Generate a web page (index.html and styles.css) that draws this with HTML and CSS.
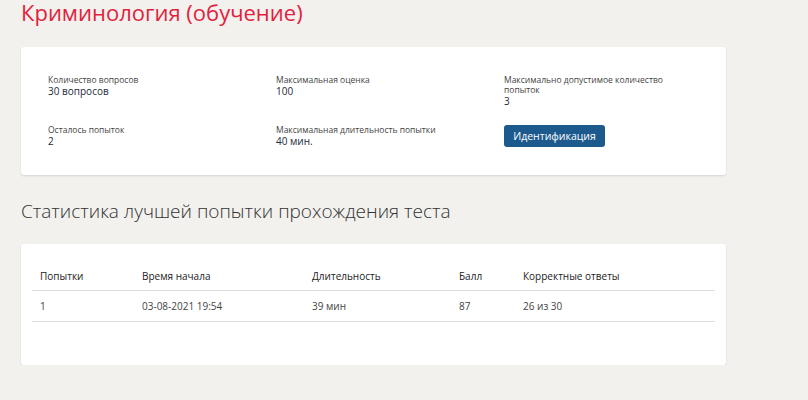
FILE: index.html
```html
<!DOCTYPE html>
<html lang="ru">
<head>
<meta charset="utf-8">
<link rel="stylesheet" href="styles.css">
</head>
<body>
<div class="page">
  <h1 class="title">Криминология (обучение)</h1>
  <section class="card info">
    <div class="item"><div class="label">Количество вопросов</div><div class="value">30 вопросов</div></div>
    <div class="item"><div class="label">Максимальная оценка</div><div class="value">100</div></div>
    <div class="item"><div class="label">Максимально допустимое количество попыток</div><div class="value">3</div></div>
    <div class="item"><div class="label">Осталось попыток</div><div class="value">2</div></div>
    <div class="item"><div class="label">Максимальная длительность попытки</div><div class="value">40 мин.</div></div>
    <div class="item"><button class="btn">Идентификация</button></div>
  </section>
  <h2 class="subtitle">Статистика лучшей попытки прохождения теста</h2>
  <section class="card stats">
    <table class="table">
      <thead>
        <tr><th class="c1">Попытки</th><th class="c2">Время начала</th><th class="c3">Длительность</th><th class="c4">Балл</th><th class="c5">Корректные ответы</th></tr>
      </thead>
      <tbody>
        <tr><td>1</td><td>03-08-2021 19:54</td><td>39 мин</td><td>87</td><td>26 из 30</td></tr>
      </tbody>
    </table>
  </section>
</div>
</body>
</html>
```
FILE: styles.css
```css
html, body {
  margin: 0;
  padding: 0;
  background: #f2f1ee;
  font-family: "Open Sans", "Noto Sans", sans-serif;
  color: #333;
}
.page {
  padding: 0 0 0 21px;
  width: 705px;
}
.title {
  margin: 0;
  font-size: 22px;
  font-weight: 500;
  line-height: 24px;
  color: #e21f3d;
}
.card {
  background: #fff;
  border-radius: 3px;
  box-shadow: 0 1px 2px rgba(0,0,0,0.12);
}
.info {
  margin-top: 23px;
  padding: 28px 27px 28px 27px;
  display: grid;
  grid-template-columns: 228px 228px 170px;
  row-gap: 18px;
  align-items: start;
}
.label {
  font-size: 8.5px;
  line-height: 10px;
  color: #444;
}
.value {
  font-size: 10px;
  line-height: 12px;
  color: #1b2a3a;
}
.btn {
  display: block;
  font-family: "Open Sans", "Noto Sans", sans-serif;
  background: #1c5a8d;
  color: #fff;
  border: 0;
  border-radius: 3px;
  width: 101px;
  height: 22px;
  padding: 0;
  font-size: 10.5px;
  line-height: 22px;
  cursor: pointer;
}
.subtitle {
  margin: 23px 0 0 0;
  font-size: 19px;
  font-weight: 300;
  line-height: 26px;
  color: #333;
}
.stats {
  margin-top: 20px;
  padding: 17px 11px 43px 11px;
}
.table {
  width: 100%;
  border-collapse: collapse;
  font-size: 10px;
}
.table th, .table td {
  text-align: left;
  padding: 0 0 0 8px;
  font-weight: 400;
  border-bottom: 1px solid #dedede;
}
.table th {
  height: 29px;
  color: #222;
}
.table td {
  height: 30px;
  color: #444;
}
.c1 { width: 94px; }
.c2 { width: 162px; }
.c3 { width: 139px; }
.c4 { width: 56px; }
```
